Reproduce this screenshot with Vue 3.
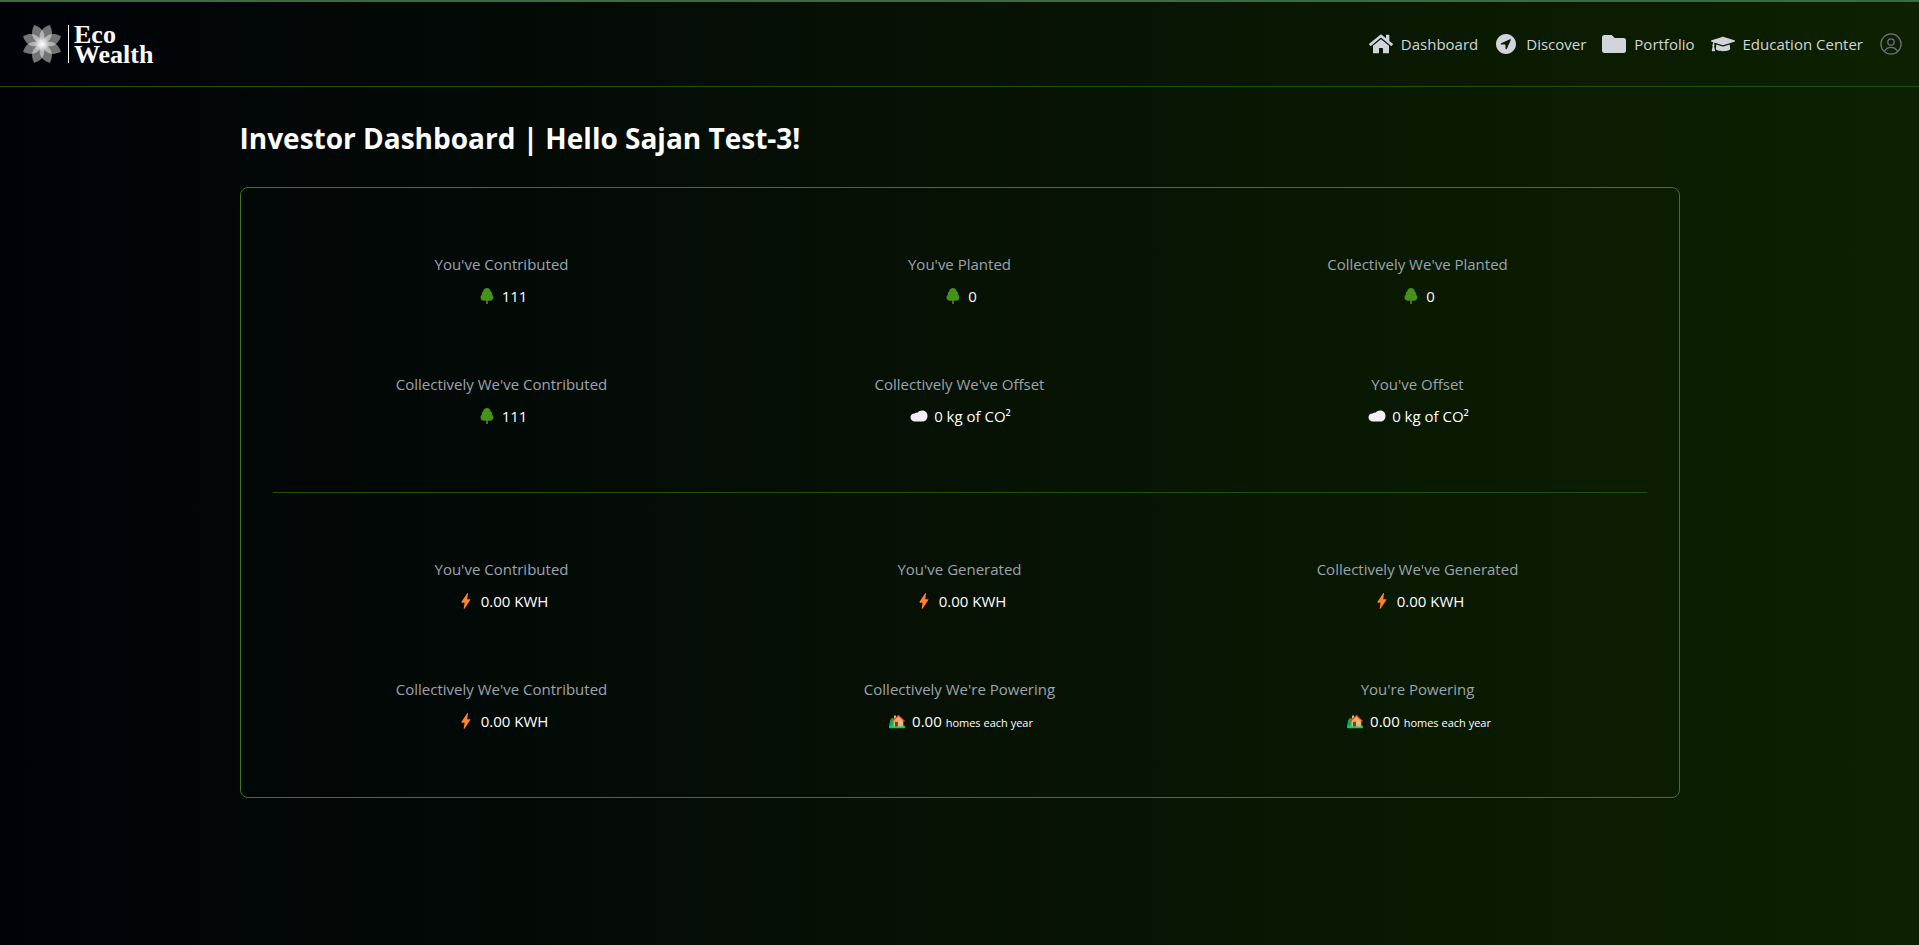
<script setup>
const icons = {
  home: {
    box: '0 0 576 512',
    d: 'M280.37 148.26L96 300.11V464a16 16 0 0 0 16 16l112.06-.29a16 16 0 0 0 15.92-16V368a16 16 0 0 1 16-16h64a16 16 0 0 1 16 16v95.64a16 16 0 0 0 16 16.05L464 480a16 16 0 0 0 16-16V300L295.67 148.26a12.19 12.19 0 0 0-15.3 0zM571.6 251.47L488 182.56V44.05a12 12 0 0 0-12-12h-56a12 12 0 0 0-12 12v72.61L318.47 43a48 48 0 0 0-61 0L4.34 251.47a12 12 0 0 0-1.6 16.9l25.5 31A12 12 0 0 0 45.15 301l235.22-193.74a12.19 12.19 0 0 1 15.3 0L530.9 301a12 12 0 0 0 16.9-1.6l25.5-31a12 12 0 0 0-1.7-16.93z',
  },
  compass: {
    box: '0 0 512 512',
    d: 'M256 43C138 43 43 138 43 256s95 213 213 213 213-95 213-213S374 43 256 43zM358 172l-83.600 186a16 16 0 0 1-30.400-6.420V274a6 6 0 0 0-6-6H160.400a16 16 0 0 1-6.420-30.400L340 154a13.500 13.500 0 0 1 18 18z',
  },
  folder: {
    box: '0 0 512 512',
    d: 'M464 128H272l-64-64H48C21.490 64 0 85.490 0 112v288c0 26.510 21.490 48 48 48h416c26.510 0 48-21.490 48-48V176c0-26.510-21.490-48-48-48z',
  },
  cap: {
    box: '0 0 640 512',
    d: 'M622.34 153.2L343.4 67.5c-15.2-4.67-31.6-4.67-46.79 0L17.66 153.2c-23.54 7.23-23.54 38.36 0 45.59l48.63 14.94c-10.67 13.19-17.23 29.28-17.88 46.9C38.78 266.15 32 276.11 32 288c0 10.78 5.68 19.85 13.86 25.65L20.33 428.53C18.11 438.52 25.71 448 35.94 448h56.11c10.24 0 17.84-9.48 15.62-19.47L82.14 313.65C90.32 307.85 96 298.78 96 288c0-11.57-6.47-21.25-15.66-26.87.76-15.02 8.44-28.3 20.69-36.72L296.6 284.5c9.06 2.78 26.44 6.25 46.79 0l278.95-85.7c23.55-7.24 23.55-38.36 0-45.6zM352.79 315.09c-28.53 8.76-52.84 3.92-65.59 0l-145.02-44.55L128 384c0 35.35 85.96 64 192 64s192-28.65 192-64l-14.18-113.47-145.03 44.56z',
  },
}

const links = [
  { label: 'Dashboard', icon: 'home' },
  { label: 'Discover', icon: 'compass' },
  { label: 'Portfolio', icon: 'folder' },
  { label: 'Education Center', icon: 'cap' },
]

const petals = [22.5, 67.5, 112.5, 157.5, 202.5, 247.5, 292.5, 337.5]

const groups = [
  [
    { label: "You've Contributed", icon: 'tree', value: '111' },
    { label: "You've Planted", icon: 'tree', value: '0' },
    { label: "Collectively We've Planted", icon: 'tree', value: '0' },
    { label: "Collectively We've Contributed", icon: 'tree', value: '111' },
    { label: "Collectively We've Offset", icon: 'cloud', value: '0 kg of CO²' },
    { label: "You've Offset", icon: 'cloud', value: '0 kg of CO²' },
  ],
  [
    { label: "You've Contributed", icon: 'bolt', value: '0.00 KWH' },
    { label: "You've Generated", icon: 'bolt', value: '0.00 KWH' },
    { label: "Collectively We've Generated", icon: 'bolt', value: '0.00 KWH' },
    { label: "Collectively We've Contributed", icon: 'bolt', value: '0.00 KWH' },
    { label: "Collectively We're Powering", icon: 'house', value: '0.00', note: 'homes each year' },
    { label: "You're Powering", icon: 'house', value: '0.00', note: 'homes each year' },
  ],
]
</script>

<template>
  <div class="page">
    <header class="topbar">
      <a class="brand" href="#" aria-label="Eco Wealth">
        <svg class="flower" viewBox="-20 -20 40 40" aria-hidden="true">
          <defs>
            <radialGradient id="glow" gradientUnits="userSpaceOnUse" cx="0" cy="0" r="8">
              <stop offset="0" stop-color="#fff" />
              <stop offset="0.3" stop-color="#fff" stop-opacity="0.7" />
              <stop offset="1" stop-color="#fff" stop-opacity="0" />
            </radialGradient>
          </defs>
          <path
            v-for="a in petals"
            :key="a"
            d="M0 0C-5-3-10-12 0-20.500C10-12 5-3 0 0z"
            :transform="`rotate(${a})`"
            fill="#fff"
            fill-opacity="0.45"
          />
          <circle r="8" fill="url(#glow)" />
        </svg>
        <span class="wordmark"><span>Eco</span><span>Wealth</span></span>
      </a>
      <nav class="nav">
        <a v-for="l in links" :key="l.label" class="link" href="#">
          <svg class="glyph" :viewBox="icons[l.icon].box" aria-hidden="true">
            <path :d="icons[l.icon].d" fill="currentColor" fill-rule="evenodd" />
          </svg>
          <span>{{ l.label }}</span>
        </a>
        <button class="account" type="button" aria-label="Account">
          <svg class="glyph" viewBox="0 0 24 24" fill="none" stroke="currentColor" stroke-width="1.3" aria-hidden="true">
            <circle cx="12" cy="12" r="10.100" />
            <circle cx="12" cy="10" r="3.200" />
            <path d="M5.500 19.300C7 16.500 9.200 15.300 12 15.300s5 1.200 6.500 4" />
          </svg>
        </button>
      </nav>
    </header>

    <main class="content">
      <h1 class="title">Investor Dashboard | Hello Sajan Test-3!</h1>
      <section class="card">
        <div v-for="(group, i) in groups" :key="i" class="group">
          <div v-for="(s, j) in group" :key="j" class="stat">
            <div class="label">{{ s.label }}</div>
            <div class="value">
              <svg v-if="s.icon === 'tree'" class="mark" viewBox="0 0 22 20" aria-hidden="true">
                <path d="M10 13h2v5h-2z" fill="#7a4b42" />
                <path d="M11 2c2 0 3.600 1.600 3.800 3.500c1.300.7 1.600 2 1.300 3.200c1 .7 1.400 1.700 1.300 2.900c0 2-1.500 3.200-3.200 3.200H7.800c-1.900 0-3.300-1.300-3.300-3.200c0-1.200.5-2.200 1.400-2.900C5.600 7.400 6 6.200 7.200 5.500C7.400 3.500 9 2 11 2z" fill="#44911b" />
              </svg>
              <svg v-else-if="s.icon === 'cloud'" class="mark" viewBox="0 0 22 20" aria-hidden="true">
                <path d="M14.200 4.500c3.200 0 5.300 2.300 5.300 5.400c0 3.500-2.300 5.700-5.500 5.700H7c-2.600 0-4.500-1.700-4.500-4c0-2.500 1.700-3.900 4-4c.9-1 2.200-1 3.300-1.200c1.200-1.200 2.600-1.900 4.400-1.900z" fill="#f3eef8" />
              </svg>
              <svg v-else-if="s.icon === 'bolt'" class="mark" viewBox="0 0 22 20" aria-hidden="true">
                <path d="M12.200 2.300L6.500 10.800c-.3.500 0 .9.500.9h2.600L8.700 17.300c0 .6.600.7 1 .3l5.600-8.500c.3-.5 0-.9-.5-.9h-2.600l.9-5.600c.1-.5-.5-.8-.9-.3z" fill="#ff822d" />
              </svg>
              <svg v-else class="mark" viewBox="0 0 22 20" aria-hidden="true">
                <path d="M3.500 15.500c-.6-2-.1-3.200.5-3.700C3.600 9.800 4.300 8 6.300 7L9 8v7.500z" fill="#00b358" />
                <rect x="3" y="14.600" width="16" height="2.600" rx="1" fill="#00d26a" />
                <path d="M7.500 9.500L12.500 4.800l4.800 4.700v6H7.500z" fill="#f3ad61" />
                <path d="M8 4.500h2v4H8z" fill="#f3ad61" />
                <path d="M6.500 10L12.500 4.500L18.200 10" fill="none" stroke="#e8403f" stroke-width="1.200" stroke-linecap="round" />
                <path d="M9 10.800h3v4.700H9z" fill="#6d4534" />
                <path d="M13.300 10.500h2.800v2.800h-2.800z" fill="#8fd3ff" />
              </svg>
              <span>{{ s.value }} <small v-if="s.note" class="note">{{ s.note }}</small></span>
            </div>
          </div>
        </div>
      </section>
    </main>
  </div>
</template>

<style>
body {
  margin: 0;
}
</style>

<style scoped>
.page {
  min-height: 100vh;
  box-sizing: border-box;
  background: linear-gradient(to right, #000208, #0d2100);
  border-top: 2px solid #3b6b43;
  color: #fff;
  font-family: "Open Sans", "Noto Sans", sans-serif;
  font-size: 15px;
  line-height: 24px;
}

.topbar {
  display: flex;
  align-items: center;
  justify-content: space-between;
  height: 84px;
  padding: 0 16px 0 22px;
  border-bottom: 1px solid #1f5205;
}

.brand {
  display: flex;
  align-items: center;
  gap: 6px;
  color: #fff;
  text-decoration: none;
}

.flower {
  width: 40px;
  height: 40px;
}

.wordmark {
  display: flex;
  flex-direction: column;
  height: 38px;
  padding-left: 5px;
  border-left: 1px solid #fff;
  font-family: "Liberation Serif", serif;
  font-size: 26px;
  font-weight: 700;
  line-height: 20px;
}

.nav {
  display: flex;
  align-items: center;
  gap: 16px;
}

.link {
  display: flex;
  align-items: center;
  gap: 8px;
  color: #d1d5db;
  text-decoration: none;
}

.glyph {
  display: block;
  width: 24px;
  height: 24px;
}

.account {
  padding: 0;
  border: 0;
  background: none;
  color: #6b7280;
}

.content {
  max-width: 1440px;
  margin: 0 auto;
  padding: 32px 0;
}

.title {
  margin: 0 0 30px;
  font-size: 28px;
  font-weight: 700;
  line-height: 38px;
}

.card {
  padding: 32px;
  border: 1px solid #3a7a1c;
  border-radius: 8px;
}

.group {
  display: grid;
  grid-template-columns: repeat(3, 1fr);
}

.group + .group {
  margin-top: 32px;
  padding-top: 32px;
  border-top: 1px solid #1f5205;
}

.stat {
  display: flex;
  flex-direction: column;
  align-items: center;
  gap: 8px;
  padding: 32px 0;
}

.label {
  color: #9ca3af;
}

.value {
  display: flex;
  align-items: center;
  gap: 4px;
}

.mark {
  width: 22px;
  height: 20px;
}

.note {
  font-size: 11px;
  line-height: 16px;
}
</style>
